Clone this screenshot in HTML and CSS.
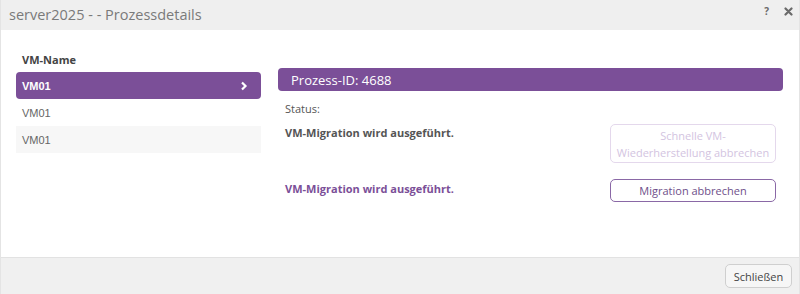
FILE: index.html
```html
<!DOCTYPE html>
<html lang="de">
<head>
    <meta charset="UTF-8">
    <meta name="viewport" content="width=device-width, initial-scale=1.0">
    <title>Prozessdetails</title>
    <link rel="stylesheet" href="styles.css">
</head>
<body>
    <div class="dialog">
        <div class="dialog-head">
            <span class="dialog-title">server2025 - - Prozessdetails</span>
            <div class="head-tools">
                <span class="tool">?</span>
                <span class="tool">
                    <svg width="9" height="9" viewBox="0 0 9 9"><path d="M1.5 1.5 L7.5 7.5 M7.5 1.5 L1.5 7.5" stroke="#6a6a6a" stroke-width="2.2" stroke-linecap="round"/></svg>
                </span>
            </div>
        </div>

        <div class="dialog-body">
            <div class="vm-list">
                <div class="list-head">VM-Name</div>
                <div class="vm-row selected">
                    <span>VM01</span>
                    <svg width="8" height="10" viewBox="0 0 8 10"><path d="M2 1.5 L5.5 5 L2 8.5" fill="none" stroke="#fff" stroke-width="2.2"/></svg>
                </div>
                <div class="vm-row">VM01</div>
                <div class="vm-row alt">VM01</div>
            </div>

            <div class="details">
                <div class="process-bar">Prozess-ID: 4688</div>
                <div class="status-label">Status:</div>
                <div class="status-row">
                    <span class="status-text">VM-Migration wird ausgeführt.</span>
                    <button class="action disabled">Schnelle VM-<br>Wiederherstellung abbrechen</button>
                </div>
                <div class="status-row">
                    <span class="status-text active">VM-Migration wird ausgeführt.</span>
                    <button class="action">Migration abbrechen</button>
                </div>
            </div>
        </div>

        <div class="dialog-foot">
            <button class="close-btn">Schließen</button>
        </div>
    </div>
</body>
</html>
```

FILE: styles.css
```css
body{
    margin: 0;
    font-family: "Open Sans", "Liberation Sans", sans-serif;
    background-color: #ffffff;
}
.dialog{
    width: 800px;
    height: 294px;
    display: flex;
    flex-direction: column;
    border-left: 1px solid #e4e4e4;
    border-right: 1px solid #e4e4e4;
    box-sizing: border-box;
}
.dialog-head{
    height: 30px;
    background-color: #efefef;
    display: flex;
    align-items: center;
    justify-content: space-between;
    padding: 0 6px 0 8px;
}
.dialog-title{
    font-size: 14.5px;
    color: #7a7a7a;
    margin-top: -2px;
}
.head-tools{
    display: flex;
    gap: 15px;
    align-items: center;
    margin-top: -8px;
}
.tool{
    font-size: 10px;
    font-weight: bold;
    color: #6a6a6a;
    display: flex;
}
.dialog-body{
    flex: 1;
    display: flex;
    padding: 22px 16px 0 15px;
}
.vm-list{
    width: 245px;
}
.list-head{
    font-size: 11px;
    font-weight: bold;
    color: #444;
    padding: 0 0 0 6px;
    height: 20px;
}
.vm-row{
    height: 27px;
    display: flex;
    align-items: center;
    justify-content: space-between;
    padding: 0 13px 0 6px;
    font-family: "Liberation Sans", Arial, sans-serif;
    font-size: 11px;
    color: #666;
}
.vm-row.selected{
    background-color: #7b4f98;
    color: #fff;
    font-weight: bold;
    border-radius: 4px;
}
.vm-row.alt{
    background-color: #f7f7f7;
}
.details{
    flex: 1;
    margin-left: 17px;
    margin-top: 16px;
}
.process-bar{
    height: 23px;
    background-color: #7b4f98;
    border-radius: 4px;
    color: #fff;
    font-size: 13px;
    display: flex;
    align-items: center;
    padding-left: 13px;
}
.status-label{
    font-size: 11px;
    color: #555;
    padding-left: 7px;
    margin-top: 10px;
}
.status-row{
    display: flex;
    justify-content: space-between;
    align-items: flex-start;
    padding: 0 7px 0 7px;
    margin-top: 8px;
}
.status-row + .status-row{
    margin-top: 16px;
}
.status-text{
    font-size: 11px;
    font-weight: bold;
    color: #555;
    margin-top: 1px;
}
.status-text.active{
    color: #7b4f98;
    margin-top: 2px;
}
.action{
    width: 166px;
    min-height: 23px;
    background-color: #fff;
    border: 1px solid #8a68a6;
    border-radius: 5px;
    font-family: "Open Sans", sans-serif;
    font-size: 11px;
    line-height: 17px;
    color: #6e4f8a;
    padding: 2px 4px;
}
.action.disabled{
    border-color: #e4d8ec;
    color: #d3c4df;
    height: 39px;
}
.dialog-foot{
    height: 36px;
    background-color: #f0f0f0;
    border-top: 1px solid #e2e2e2;
    display: flex;
    justify-content: flex-end;
    align-items: center;
    padding-right: 7px;
}
.close-btn{
    width: 67px;
    height: 24px;
    background-color: #f6f6f6;
    border: 1px solid #cfcfcf;
    border-radius: 5px;
    font-family: "Open Sans", sans-serif;
    font-size: 11px;
    color: #444;
}
```
